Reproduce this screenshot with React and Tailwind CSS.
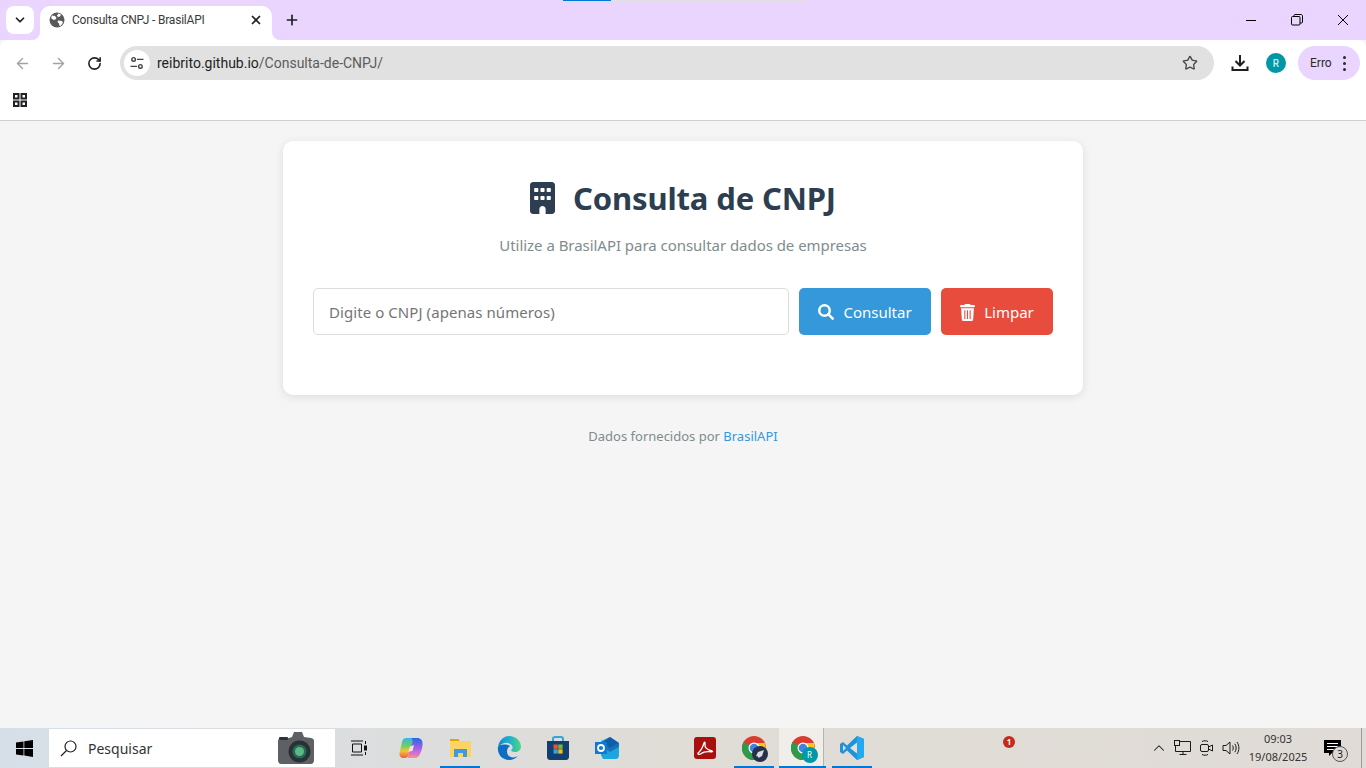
import React from "react";
import { ArrowLeft, ArrowRight, RotateCw, Star, Plus, X, ChevronDown, ChevronUp } from "lucide-react";

const Globe = () => (
  <svg width="16" height="16" viewBox="0 0 16 16"><circle cx="8" cy="8" r="7.500" fill="#5a5a5a" /><path d="M3 3.500l3 .5 1.500 2-1 1.500-2 .5L2 6zM9.500 1.500l2.500 1-1 2-2 .5-1-1.500zM9 8.500l4 .5 1 1.500-2 3-1.500 .5-.5-2.500-1.500-1.500z" fill="#fff" /></svg>
);
const Apps = () => (
  <svg width="16" height="16" viewBox="0 0 16 16" fill="none" stroke="#202124" strokeWidth="2"><rect x="2" y="2" width="4.500" height="4.500" /><rect x="9.500" y="2" width="4.500" height="4.500" /><rect x="2" y="9.500" width="4.500" height="4.500" /><rect x="9.500" y="9.500" width="4.500" height="4.500" /></svg>
);
const Tune = () => (
  <svg width="14" height="14" viewBox="0 0 14 14" fill="none" stroke="#444" strokeWidth="1.400"><circle cx="3.600" cy="3.400" r="1.800" /><path d="M7 3.400h6.500M.5 10.400H7" /><circle cx="10.400" cy="10.400" r="1.800" /></svg>
);
const Download = () => (
  <svg width="18" height="18" viewBox="0 0 18 18" fill="none" stroke="#1f1f1f" strokeWidth="2"><path d="M9 1v10M4.500 7L9 11.500 13.500 7" /><path d="M1.500 12.500v3.500h15v-3.500" /></svg>
);
const Building = () => (
  <svg width="25" height="32" viewBox="0 0 384 512" fill="#2c3e50" preserveAspectRatio="none"><path d="M48 0C21.500 0 0 21.500 0 48V464c0 26.500 21.500 48 48 48h96V432c0-26.500 21.500-48 48-48s48 21.500 48 48v80h96c26.500 0 48-21.500 48-48V48c0-26.500-21.500-48-48-48H48zM64 240c0-8.800 7.200-16 16-16h32c8.800 0 16 7.200 16 16v32c0 8.800-7.200 16-16 16H80c-8.800 0-16-7.200-16-16V240zm112-16h32c8.800 0 16 7.200 16 16v32c0 8.800-7.200 16-16 16H176c-8.800 0-16-7.200-16-16V240c0-8.800 7.200-16 16-16zm80 16c0-8.800 7.200-16 16-16h32c8.800 0 16 7.200 16 16v32c0 8.800-7.200 16-16 16H272c-8.800 0-16-7.200-16-16V240zM80 96h32c8.800 0 16 7.200 16 16v32c0 8.800-7.200 16-16 16H80c-8.800 0-16-7.200-16-16V112c0-8.800 7.200-16 16-16zm80 16c0-8.800 7.200-16 16-16h32c8.800 0 16 7.200 16 16v32c0 8.800-7.200 16-16 16H176c-8.800 0-16-7.200-16-16V112zM272 96h32c8.800 0 16 7.200 16 16v32c0 8.800-7.200 16-16 16H272c-8.800 0-16-7.200-16-16V112c0-8.800 7.200-16 16-16z" /></svg>
);
const FaSearch = () => (
  <svg width="16" height="16" viewBox="0 0 512 512" fill="none" stroke="#fff" strokeWidth="80" strokeLinecap="round"><circle cx="208" cy="208" r="168" /><path d="M335 335L470 470" /></svg>
);
const FaTrash = () => (
  <svg width="15" height="17" viewBox="0 0 448 512" fill="#fff"><path d="M135.200 17.700L128 32H32C14.300 32 0 46.300 0 64S14.300 96 32 96H416c17.700 0 32-14.300 32-32s-14.300-32-32-32H320l-7.200-14.300C307.400 6.800 296.300 0 284.200 0H163.800c-12.100 0-23.200 6.800-28.600 17.700zM32 128L53.200 467c1.600 25.300 22.600 45 47.900 45H346.900c25.300 0 46.300-19.700 47.900-45L416 128zM128 190H160V450H128zM208 190H240V450H208zM288 190H320V450H288z" fillRule="evenodd" /></svg>
);
const WinLogo = () => (
  <svg width="17" height="17" viewBox="0 0 17 17" fill="#000"><path d="M0 2.400l7.500-1v6.700H0zM8.300 1.300L17 0v8.100H8.300zM0 8.900h7.500v6.700l-7.500-1zM8.300 8.900H17v8l-8.700-1.300z" /></svg>
);
const SearchWin = () => (
  <svg width="17" height="17" viewBox="0 0 17 17" fill="none" stroke="#222" strokeWidth="1.200"><circle cx="10.500" cy="6.500" r="5.500" /><path d="M6.500 10.500L1 16" /></svg>
);
const TaskView = () => (
  <svg width="18" height="16" viewBox="0 0 18 16" fill="none" stroke="#111" strokeWidth="1"><path d="M1 1h12M1 15h12M2.500 4h9v8h-9z" /><path d="M15.500 1v3M15.500 12v3" /><rect x="14.500" y="6" width="2" height="4" fill="#111" /></svg>
);
const Copilot = () => (
  <svg width="24" height="22" viewBox="0 0 24 22"><defs><linearGradient id="cp" x1="0" y1="0" x2="0" y2="1"><stop offset="0" stopColor="#38b6e8" /><stop offset="0.4" stopColor="#6fcf5a" /><stop offset="0.65" stopColor="#f5c33b" /><stop offset="1" stopColor="#ee5a3e" /></linearGradient><linearGradient id="cp2" x1="0" y1="0" x2="0" y2="1"><stop offset="0" stopColor="#2468e0" /><stop offset="0.5" stopColor="#a060e8" /><stop offset="0.8" stopColor="#e070d0" /><stop offset="1" stopColor="#f59a6a" /></linearGradient></defs><path d="M7 1h7c1 0 1 1 .5 2L10 17c-1 3-2.500 4-4.500 4H4.500C1.500 21 0 18.500 .5 16L3 5c.5-2.500 2-4 4-4z" fill="url(#cp)" /><path d="M12 1h6.500c3 0 5 2.500 5 5 .2 3-.5 7-2.500 11-1 2.500-3 4-5 4H9.500c-1 0-1.200-1-.5-2l4.500-14c.4-1.500 0-3-1.500-4z" fill="url(#cp2)" /><path d="M11 9.500l4-1.500-1.500 6-4 .8z" fill="#fbeee4" opacity=".9" /></svg>
);
const Explorer = () => (
  <svg width="22" height="20" viewBox="0 0 22 20"><path d="M1 1h8l2 2H1z" fill="#e0a400" /><rect x="1" y="3" width="21" height="16" rx="1" fill="#fcd462" /><rect x="5" y="11" width="13" height="8" fill="#3f9ae0" /><rect x="9" y="15" width="5" height="4" fill="#fcd462" /></svg>
);
const Edge = () => (
  <svg width="24" height="24" viewBox="0 0 24 24"><defs><linearGradient id="eg" x1="0" y1="0" x2="1" y2="0"><stop offset="0" stopColor="#1a86d8" /><stop offset=".55" stopColor="#22b5c4" /><stop offset="1" stopColor="#52d67a" /></linearGradient></defs><path d="M1 11C2 4 7 0 12 0c7 0 12 5 12 11 0 3-3 5-6 5-2 0-4-1-4-2 2-1 2-3 1-4.500C13 7 9 6 6 7.500 3 9 1.500 10 1 11z" fill="url(#eg)" /><path d="M1 11C0 18 5 24 12 24c4 0 7-2 9-4-3 2-8 2-10-1-2-3-1-7 2-9C9 8 3 8 1 11z" fill="#0c6fc4" /></svg>
);
const Store = () => (
  <svg width="22" height="24" viewBox="0 0 22 24"><path d="M6 6V3c0-1 1-2 2-2h6c1 0 2 1 2 2v3" fill="none" stroke="#2fa6df" strokeWidth="2" /><path d="M0 5h22v16c0 1.500-1 3-3 3H3c-2 0-3-1.500-3-3z" fill="#113f70" /><rect x="6.500" y="8.500" width="4.300" height="4.300" fill="#e8562f" /><rect x="11.300" y="8.500" width="4.300" height="4.300" fill="#7cb92f" /><rect x="6.500" y="13.300" width="4.300" height="4.300" fill="#2fa6df" /><rect x="11.300" y="13.300" width="4.300" height="4.300" fill="#fbb812" /></svg>
);
const Outlook = () => (
  <svg width="24" height="22" viewBox="0 0 24 22"><path d="M6 4l9-4 9 6v12c0 2-1 4-3 4H8l-2-4z" fill="#1ea5df" /><path d="M15 0l9 6-9 5-9-5z" fill="#0f5fa8" /><path d="M10 11l14-5v4l-9 5z" fill="#0f5fa8" opacity=".7" /><rect x="0" y="5" width="12" height="12" fill="#0f78d0" /><circle cx="6" cy="11" r="3" fill="none" stroke="#fff" strokeWidth="1.800" /></svg>
);
const Acrobat = () => (
  <svg width="22" height="22" viewBox="0 0 22 22"><rect width="22" height="22" rx="3" fill="#a80f0f" /><path d="M4 16c2-1 5-6 6-10 .3-1.500 1.500-1 1 1-.5 3 2 6 7 7 1 .3.800 1-1 .8-3-.3-8 .2-10 2-1.500 1-3.500 .5-3-.8z" fill="none" stroke="#fff" strokeWidth="1.300" /></svg>
);
const Chrome = ({ children }) => (
  <span className="relative flex w-6 h-6">
    <svg width="24" height="24" viewBox="0 0 24 24"><circle cx="12" cy="12" r="12" fill="#dc3b2e" /><path d="M12 12L1.600 6A12 12 0 0 0 12 24l5-7z" fill="#2d9b49" /><path d="M12 7h10.700A12 12 0 0 1 12 24l5-9z" fill="#f7c61b" /><circle cx="12" cy="12" r="5.500" fill="#fff" /><circle cx="12" cy="12" r="4.300" fill="#3d83e8" /></svg>
    {children}
  </span>
);
const VSCode = () => (
  <svg width="24" height="24" viewBox="0 0 24 24"><path d="M17 0l7 3v18l-7 3L7 14.500 3 18l-3-2v-8l3-2 4 3.500z" fill="#1e93d8" /><path d="M17 0l7 3v18l-7 3z" fill="#24a8ee" /><path d="M17 6.500L10 12l7 5.500z" fill="#e4e0da" /><path d="M3 9l3 3-3 3z" fill="#e4e0da" /></svg>
);
const Camera = () => (
  <svg width="36" height="32" viewBox="0 0 36 32"><path d="M0 9c0-1.500 1-3 3-3h8l3-1 2-5h8l2 5 7 1c2 .3 3 1.500 3 3v19c0 2-1 4-3 4H3c-2 0-3-2-3-4z" fill="#5d6065" /><rect x="1" y="5" width="9" height="3" rx="1" fill="#2f3236" /><circle cx="21.500" cy="19.500" r="11" fill="#2c2f33" /><circle cx="21.500" cy="19.500" r="7" fill="#1c6f55" /><circle cx="21.500" cy="19.500" r="4.500" fill="#62b585" /></svg>
);
const Monitor = () => (
  <svg width="17" height="16" viewBox="0 0 17 16" fill="none" stroke="#1a1a1a"><path d="M5.500 1.500h11v10H1.500V5.500" /><path d="M9 11.500V14.500M5.500 14.500h7" /><rect x=".5" y=".5" width="5" height="5" /></svg>
);
const Meet = () => (
  <svg width="16" height="18" viewBox="0 0 16 18" fill="none" stroke="#1a1a1a"><rect x="1.500" y="5.500" width="8" height="7" rx="1.500" /><path d="M9.500 8l4-2v6l-4-2zM3 2.500c2-1 4-1 6 0M3 15.500c2 1 4 1 6 0" /></svg>
);
const Speaker = () => (
  <svg width="18" height="16" viewBox="0 0 18 16" fill="none" stroke="#1a1a1a"><path d="M1 5.500h3L8 2v12l-4-3.500H1z" /><path d="M10.500 5.500c1 1.500 1 3.500 0 5M12.800 3.800c1.800 2.500 1.800 6 0 8.400M15 2c2.500 3.500 2.500 8.500 0 12" /></svg>
);
const Note = () => (
  <svg width="18" height="17" viewBox="0 0 18 17"><path d="M0 0h17v13H8l-3 3v-3H0z" fill="#000" /><path d="M3 3.500h11M3 6.500h11M3 9.500h8" stroke="#fff" /></svg>
);

const TaskApp = ({ children, active, hl, cls }) => (
  <div className={`relative w-[49px] h-10 flex items-center justify-center pr-[2px] ${cls || ""}`}>
    {hl && <span className="absolute inset-y-0 left-0 w-[45px] bg-[#f1eeea] border-r border-[#b5b3b0]" />}
    <span className="relative flex">{children}</span>
    {active && !hl && <span className="absolute bottom-0 left-[4px] w-[40px] h-[2px] bg-[#0078d4]" />}
    {active && hl && <span className="absolute bottom-0 left-0 w-[47px] h-[2px] bg-[#0078d4]" />}
  </div>
);

const Flare = ({ side }) => (
  <span className={`absolute bottom-0 w-2 h-2 bg-white ${side === "l" ? "-left-2" : "-right-2"}`}>
    <span className={`block w-2 h-2 bg-[#e9d5ff] ${side === "l" ? "rounded-br-lg" : "rounded-bl-lg"}`} />
  </span>
);

export default function App() {
  return (
    <div className="h-[768px] w-[1366px] overflow-hidden flex flex-col bg-[#f5f5f5] font-['Noto_Sans','Open_Sans',sans-serif]">
      {/* Tab strip */}
      <div className="relative h-10 shrink-0 bg-[#e9d5ff] flex items-start font-['Roboto','Noto_Sans',sans-serif]">
        <span className="absolute top-0 left-[563px] w-[48px] h-[1px] bg-[#0078d4]" />
        <span className="absolute top-0 left-[611px] w-[194px] h-[1px] bg-[#e2e2e2]" />
        <div className="ml-[6px] mt-[6px] w-[28px] h-[28px] rounded-lg bg-white flex items-center justify-center">
          <ChevronDown size={14} strokeWidth={3} color="#1f1f1f" />
        </div>
        <div className="relative ml-[6px] mt-[6px] w-[232px] h-[34px] bg-white rounded-t-[10px] flex items-center pl-[9px] pr-[9px] pb-[6px]">
          <Flare side="l" />
          <Flare side="r" />
          <Globe />
          <span className="ml-[7px] text-xs tracking-[-0.2px] text-[#3a3a3a] flex-1 whitespace-nowrap">Consulta CNPJ - BrasilAPI</span>
          <X size={14} strokeWidth={3} color="#1f1f1f" />
        </div>
        <div className="ml-[12px] mt-[12px] w-4 h-4 flex items-center justify-center">
          <Plus size={16} strokeWidth={2.500} color="#1f1f1f" />
        </div>
        <div className="ml-auto flex h-10 items-center">
          <div className="w-[46px] flex justify-center"><span className="w-[10px] h-[1px] bg-black" /></div>
          <div className="w-[46px] flex justify-center">
            <svg width="12" height="12" viewBox="0 0 12 12" fill="none" stroke="#000"><rect x=".5" y="2.500" width="8.500" height="8.500" rx="1" /><path d="M3 2.500V1.500c0-.5 .5-1 1-1h6c.8 0 1.500 .7 1.500 1.500v6c0 .5-.5 1-1 1H9" /></svg>
          </div>
          <div className="w-[46px] flex justify-center">
            <svg width="12" height="12" viewBox="0 0 12 12" stroke="#000"><path d="M1 1l10 10M11 1L1 11" /></svg>
          </div>
        </div>
      </div>

      {/* Toolbar */}
      <div className="h-10 shrink-0 bg-white rounded-t-lg flex items-center pt-[6px] font-['Roboto','Noto_Sans',sans-serif]">
        <ArrowLeft size={17} color="#a3a3a3" strokeWidth={2} className="ml-[14px]" />
        <ArrowRight size={17} color="#a3a3a3" strokeWidth={2} className="ml-[19px]" />
        <RotateCw size={15} color="#1f1f1f" strokeWidth={2.500} className="ml-[20px]" />
        <div className="ml-[18px] w-[1094px] h-[34px] rounded-full bg-[#e1e1e1] flex items-center pl-[4px] pr-[16px]">
          <div className="w-[26px] h-[26px] rounded-full bg-white flex items-center justify-center"><Tune /></div>
          <span className="ml-[7px] text-[14px] text-[#1f1f1f] flex-1 whitespace-nowrap">reibrito.github.io<span className="text-[#5c5c5c]">/Consulta-de-CNPJ/</span></span>
          <Star size={16} color="#474747" strokeWidth={2} />
        </div>
        <div className="ml-[17px]"><Download /></div>
        <div className="ml-[17px] w-5 h-5 rounded-full bg-[#0097a7] text-[#cdeef2] text-[10px] font-medium flex items-center justify-center">R</div>
        <div className="ml-[12px] w-[62px] h-[34px] rounded-full bg-[#e9d5ff] flex items-center pl-[12px] text-xs text-[#2a2a2a]">
          Erro
          <span className="ml-[11px] flex flex-col gap-[3px]">
            <span className="w-[3px] h-[3px] rounded-full bg-[#2a2a2a]" />
            <span className="w-[3px] h-[3px] rounded-full bg-[#2a2a2a]" />
            <span className="w-[3px] h-[3px] rounded-full bg-[#2a2a2a]" />
          </span>
        </div>
      </div>

      {/* Bookmarks */}
      <div className="h-[41px] shrink-0 bg-white border-b border-[#cfcfcf] flex items-center pl-3 pb-[1px]">
        <Apps />
      </div>

      {/* Page */}
      <main className="flex-1 flex flex-col items-center pt-5 text-[#333]">
        <div className="w-[800px] h-[254px] bg-white rounded-[10px] shadow-[0_2px_10px_rgba(0,0,0,0.1)] p-[30px]">
          <h1 className="flex items-center justify-center text-[31px] leading-[36px] mt-[9px] font-bold text-[#2c3e50] tracking-[-0.15px]">
            <Building />
            <span className="ml-[18px]">Consulta de CNPJ</span>
          </h1>
          <p className="mt-[19px] text-center text-[15px] leading-5 tracking-[-0.04px] text-[#7f8c8d]">Utilize a BrasilAPI para consultar dados de empresas</p>
          <div className="mt-[33px] flex gap-[10px] h-[47px]">
            <div className="flex-1 border border-[#dddddd] rounded-[5px] flex items-center px-[15px] pt-[1px] text-[15px] tracking-[0.07px] text-[#757575]">Digite o CNPJ (apenas números)</div>
            <button className="w-[132px] bg-[#3498db] rounded-[5px] text-white text-[15px] flex items-center justify-center gap-[9px] pt-[1px]"><FaSearch />Consultar</button>
            <button className="w-[112px] bg-[#e74c3c] rounded-[5px] text-white text-[15px] flex items-center justify-center gap-[9px] pt-[1px]"><FaTrash />Limpar</button>
          </div>
        </div>
        <p className="mt-[31px] text-[13px] leading-[20px] text-[#7f8c8d]">Dados fornecidos por <span className="text-[#3498db]">BrasilAPI</span></p>
      </main>

      {/* Taskbar */}
      <div className="relative h-10 shrink-0 bg-gradient-to-r from-[#d6dfe8] via-[#e0dcd6] to-[#e0dbd6] flex items-center font-['Noto_Sans',sans-serif]">
        <div className="w-[49px] flex justify-center"><WinLogo /></div>
        <div className="relative w-[286px] h-[38px] bg-white flex items-center pl-[11px]">
          <SearchWin />
          <span className="ml-[11px] text-[14px] text-[#333]">Pesquisar</span>
          <span className="absolute left-[229px] top-[3px]"><Camera /></span>
        </div>
        <div className="flex items-center">
          <TaskApp><TaskView /></TaskApp>
          <TaskApp cls="ml-[3px]"><Copilot /></TaskApp>
          <TaskApp active><Explorer /></TaskApp>
          <TaskApp><Edge /></TaskApp>
          <TaskApp><Store /></TaskApp>
          <TaskApp><Outlook /></TaskApp>
          <TaskApp cls="ml-[49px]"><Acrobat /></TaskApp>
          <TaskApp active><Chrome><span className="absolute -right-[2px] -bottom-[2px] w-4 h-4 rounded-full bg-[#27304a] flex items-center justify-center"><svg width="10" height="10" viewBox="0 0 10 10"><path d="M9 1L3 3 1 7l2 .5L3.500 9l3.500-2z" fill="#d8dce8" /></svg></span></Chrome></TaskApp>
          <TaskApp active hl><Chrome><span className="absolute -right-[3px] -bottom-[3px] w-4 h-4 rounded-full bg-[#0097a7] text-[8px] text-white flex items-center justify-center">R</span></Chrome></TaskApp>
          <TaskApp active><VSCode /></TaskApp>
        </div>
        <span className="absolute left-[1003px] top-[8px] w-3 h-3 rounded-full bg-[#c42b1c] text-white text-[8px] font-bold leading-3 text-center">1</span>
        <div className="ml-auto flex items-center text-[#1a1a1a]">
          <ChevronUp size={18} strokeWidth={1.400} />
          <span className="ml-[6px]"><Monitor /></span>
          <span className="ml-[8px]"><Meet /></span>
          <span className="ml-[7px]"><Speaker /></span>
          <div className="ml-[4px] w-[68px] text-center text-[11px] leading-[18px] text-[#333]">
            <div>09:03</div>
            <div>19/08/2025</div>
          </div>
          <div className="relative ml-[12px] mr-[24px] w-[18px] h-[17px]">
            <Note />
            <span className="absolute left-[8px] top-[6px] w-4 h-4 rounded-full bg-[#dcd8d3] border border-[#555] text-[10px] leading-[14px] text-center">3</span>
          </div>
        </div>
        <span className="absolute right-[4px] top-0 bottom-0 w-[1px] bg-[#9b9b9b]" />
      </div>
    </div>
  );
}
